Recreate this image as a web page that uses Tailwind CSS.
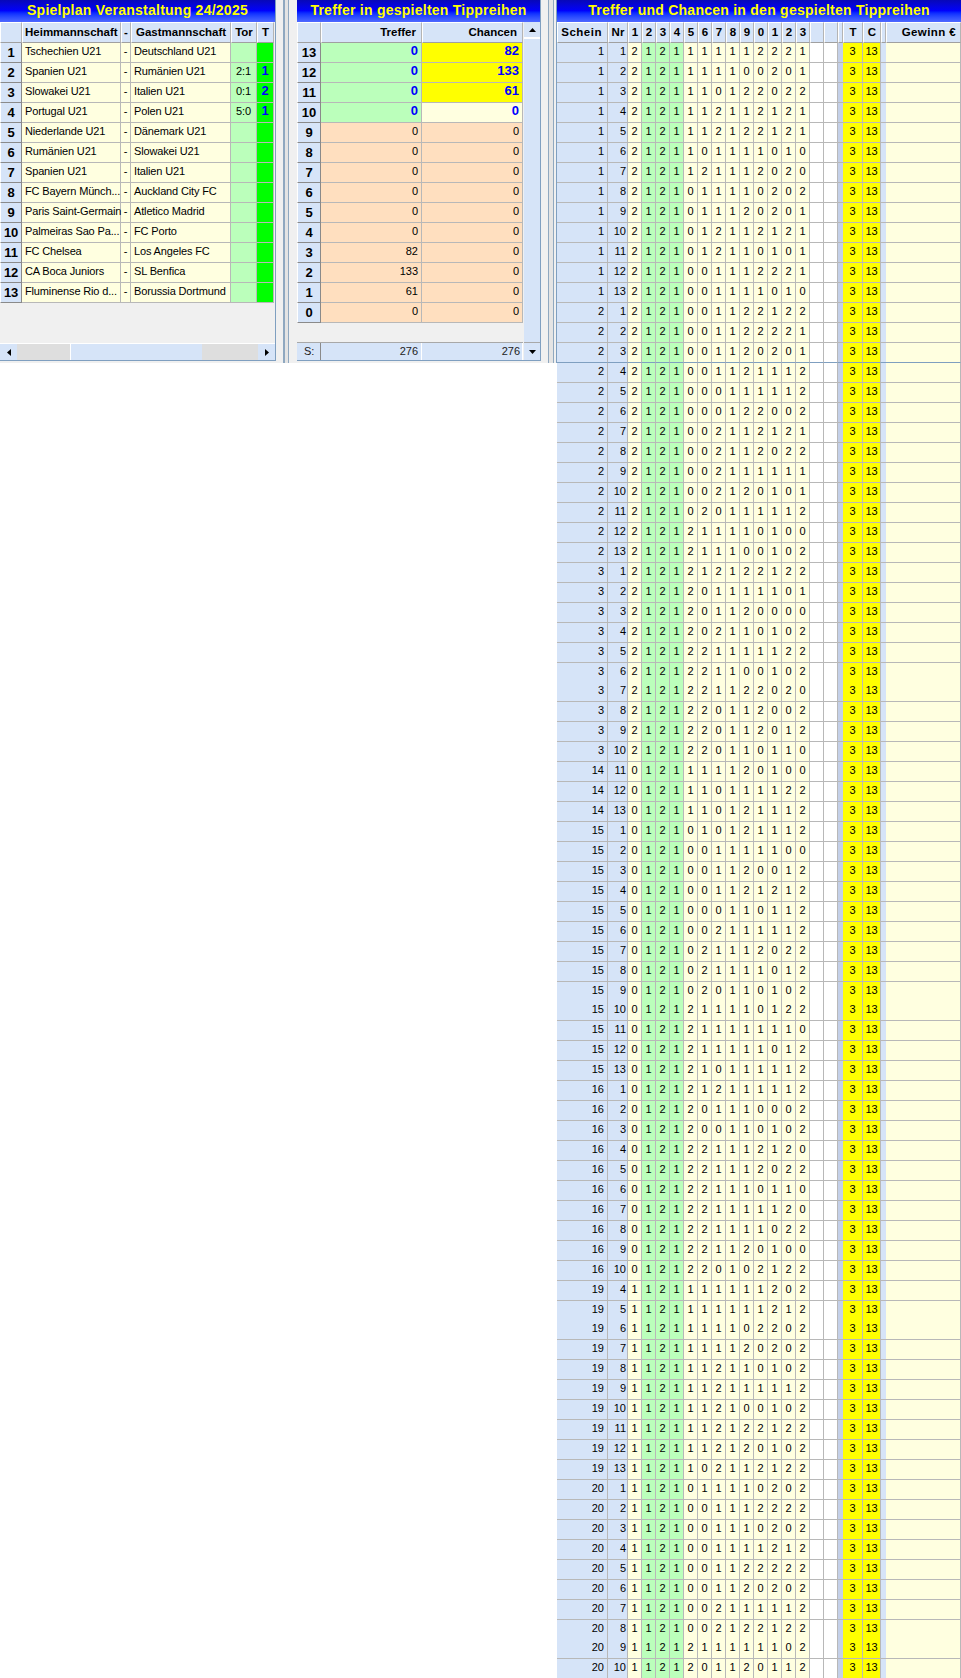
<!DOCTYPE html>
<html lang="de">
<head>
<meta charset="utf-8">
<title>Spielplan</title>
<script src="https://cdn.jsdelivr.net/npm/@tailwindcss/browser@4"></script>
</head>
<body class="bg-white">
<div class="w-[961px] h-[1678px] overflow-hidden flex items-start font-['Liberation_Sans',Arial,sans-serif] text-[11px] text-black">

<div class="w-[557px] h-[363px] bg-[#f0f0f0] flex shrink-0">
  <section class="w-[276px] h-[361px] flex flex-col border-r border-b border-[#7f9fc0] shrink-0">
    <h2 class="h-[22px] shrink-0 bg-gradient-to-b from-[#0808b8] via-[#0000ff] to-[#4f68ff] text-[#ffff00] font-bold text-[14px] leading-[21px] text-center tracking-[0.25px]">Spielplan Veranstaltung 24/2025</h2>
    <table class="table-fixed border-separate border-spacing-0 w-[274px] [&_th]:p-0 [&_th]:h-[21px] [&_th]:bg-[#d6e4f8] [&_th]:border-t [&_th]:border-l [&_th]:border-white [&_th]:border-r [&_th]:border-r-[#b4b4b4] [&_th]:border-b [&_th]:border-b-[#a0a0a0] [&_th]:text-[11.5px] [&_th]:font-bold [&_td]:p-0 [&_td]:h-5 [&_td]:align-top [&_td]:leading-[16px] [&_td]:whitespace-nowrap [&_td]:tracking-[-0.15px] [&_td]:border-r [&_td]:border-b [&_td]:border-[#b8b8b8] [&_td:nth-child(2)]:pl-[3px] [&_td:nth-child(4)]:pl-[3px] [&_td:nth-child(3)]:text-center [&_td:nth-child(5)]:text-center [&_td:nth-child(6)]:text-center [&_td:nth-child(6)]:text-[#0000ff] [&_td:nth-child(6)]:font-bold [&_td:nth-child(6)]:text-[13px] [&_td:first-child]:bg-[#d6e4f8] [&_td:first-child]:text-center [&_td:first-child]:font-bold [&_td:first-child]:text-[13px] [&_td:first-child]:leading-[19px] [&_td:first-child]:border-l [&_td:first-child]:border-l-white [&_td:first-child]:border-r-[#8a8a8a] [&_td:first-child]:border-b-[#8a8a8a]">
      <colgroup><col class="w-[22px]"><col class="w-[99px] bg-[#ffffe0]"><col class="w-[10px] bg-[#ffffe0]"><col class="w-[100px] bg-[#ffffe0]"><col class="w-[26px] bg-[#bbffbb]"><col class="w-[17px] bg-[#00ff00]"></colgroup>
      <thead><tr><th></th><th class="text-left pl-[2px]!">Heimmannschaft</th><th>-</th><th class="text-left pl-[4px]!">Gastmannschaft</th><th>Tor</th><th>T</th></tr></thead>
      <tbody>
        <tr><td>1</td><td>Tschechien U21</td><td>-</td><td>Deutschland U21</td><td></td><td></td></tr>
        <tr><td>2</td><td>Spanien U21</td><td>-</td><td>Rumänien U21</td><td>2:1</td><td>1</td></tr>
        <tr><td>3</td><td>Slowakei U21</td><td>-</td><td>Italien U21</td><td>0:1</td><td>2</td></tr>
        <tr><td>4</td><td>Portugal U21</td><td>-</td><td>Polen U21</td><td>5:0</td><td>1</td></tr>
        <tr><td>5</td><td>Niederlande U21</td><td>-</td><td>Dänemark U21</td><td></td><td></td></tr>
        <tr><td>6</td><td>Rumänien U21</td><td>-</td><td>Slowakei U21</td><td></td><td></td></tr>
        <tr><td>7</td><td>Spanien U21</td><td>-</td><td>Italien U21</td><td></td><td></td></tr>
        <tr><td>8</td><td>FC Bayern Münch...</td><td>-</td><td>Auckland City FC</td><td></td><td></td></tr>
        <tr><td>9</td><td>Paris Saint-Germain</td><td>-</td><td>Atletico Madrid</td><td></td><td></td></tr>
        <tr><td>10</td><td>Palmeiras Sao Pa...</td><td>-</td><td>FC Porto</td><td></td><td></td></tr>
        <tr><td>11</td><td>FC Chelsea</td><td>-</td><td>Los Angeles FC</td><td></td><td></td></tr>
        <tr><td>12</td><td>CA Boca Juniors</td><td>-</td><td>SL Benfica</td><td></td><td></td></tr>
        <tr><td>13</td><td>Fluminense Rio d...</td><td>-</td><td>Borussia Dortmund</td><td></td><td></td></tr>
      </tbody>
    </table>
    <div class="mt-auto h-[17px] flex border-t border-white bg-[#dedede]">
      <div class="w-[17px] flex items-center justify-center bg-[#d6e4f8]"><svg width="4" height="7" viewBox="0 0 4 7"><polygon points="4,0 4,7 0,3.5" fill="#000"/></svg></div>
      <div class="w-[53px]"></div>
      <div class="w-[132px] bg-[#d6e4f8] border-l border-white"></div>
      <div class="flex-1"></div>
      <div class="w-[17px] flex items-center justify-center bg-[#d6e4f8]"><svg width="4" height="7" viewBox="0 0 4 7"><polygon points="0,0 0,7 4,3.5" fill="#000"/></svg></div>
    </div>
  </section>

  <div class="ml-[7px] w-[6px] h-full border-l-2 border-r border-[#8fa8c0] bg-[#e4e4e4] shrink-0"></div>

  <section class="ml-[8px] w-[244px] h-[361px] flex flex-col border-r border-b border-[#7f9fc0] shrink-0">
    <h2 class="h-[22px] shrink-0 bg-gradient-to-b from-[#0808b8] via-[#0000ff] to-[#4f68ff] text-[#ffff00] font-bold text-[14px] leading-[21px] text-center tracking-[0.25px]">Treffer in gespielten Tippreihen</h2>
    <div class="flex flex-1">
      <div class="w-[226px] flex flex-col">
        <table class="table-fixed border-separate border-spacing-0 w-[226px] [&_th]:p-0 [&_th]:h-[21px] [&_th]:bg-[#d6e4f8] [&_th]:border-t [&_th]:border-l [&_th]:border-white [&_th]:border-r [&_th]:border-r-[#b4b4b4] [&_th]:border-b [&_th]:border-b-[#a0a0a0] [&_th]:text-[11.5px] [&_th]:font-bold [&_th]:text-right [&_th]:pr-[5px] [&_td]:p-0 [&_td]:h-5 [&_td]:align-top [&_td]:leading-[16px] [&_td]:text-right [&_td]:pr-[3px] [&_td]:border-r [&_td]:border-b [&_td]:border-[#b8b8b8] [&_td:first-child]:pr-0 [&_td:first-child]:bg-[#d6e4f8] [&_td:first-child]:text-center [&_td:first-child]:font-bold [&_td:first-child]:text-[13px] [&_td:first-child]:leading-[19px] [&_td:first-child]:border-l [&_td:first-child]:border-l-white [&_td:first-child]:border-r-[#8a8a8a] [&_td:first-child]:border-b-[#8a8a8a]">
          <colgroup><col class="w-[24px]"><col class="w-[101px]"><col class="w-[101px]"></colgroup>
          <thead><tr><th></th><th>Treffer</th><th>Chancen</th></tr></thead>
          <tbody>
            <tr><td>13</td><td class="bg-[#bbffbb] text-[#0000ff] font-bold text-[13px]">0</td><td class="bg-[#ffff00] text-[#0000ff] font-bold text-[13px]">82</td></tr>
            <tr><td>12</td><td class="bg-[#bbffbb] text-[#0000ff] font-bold text-[13px]">0</td><td class="bg-[#ffff00] text-[#0000ff] font-bold text-[13px]">133</td></tr>
            <tr><td>11</td><td class="bg-[#bbffbb] text-[#0000ff] font-bold text-[13px]">0</td><td class="bg-[#ffff00] text-[#0000ff] font-bold text-[13px]">61</td></tr>
            <tr><td>10</td><td class="bg-[#bbffbb] text-[#0000ff] font-bold text-[13px]">0</td><td class="bg-[#ffffe0] text-[#0000ff] font-bold text-[13px]">0</td></tr>
            <tr><td>9</td><td class="bg-[#ffdfbf]">0</td><td class="bg-[#ffdfbf]">0</td></tr>
            <tr><td>8</td><td class="bg-[#ffdfbf]">0</td><td class="bg-[#ffdfbf]">0</td></tr>
            <tr><td>7</td><td class="bg-[#ffdfbf]">0</td><td class="bg-[#ffdfbf]">0</td></tr>
            <tr><td>6</td><td class="bg-[#ffdfbf]">0</td><td class="bg-[#ffdfbf]">0</td></tr>
            <tr><td>5</td><td class="bg-[#ffdfbf]">0</td><td class="bg-[#ffdfbf]">0</td></tr>
            <tr><td>4</td><td class="bg-[#ffdfbf]">0</td><td class="bg-[#ffdfbf]">0</td></tr>
            <tr><td>3</td><td class="bg-[#ffdfbf]">82</td><td class="bg-[#ffdfbf]">0</td></tr>
            <tr><td>2</td><td class="bg-[#ffdfbf]">133</td><td class="bg-[#ffdfbf]">0</td></tr>
            <tr><td>1</td><td class="bg-[#ffdfbf]">61</td><td class="bg-[#ffdfbf]">0</td></tr>
            <tr><td>0</td><td class="bg-[#ffdfbf]">0</td><td class="bg-[#ffdfbf]">0</td></tr>
          </tbody>
        </table>
        <div class="mt-auto h-[18px] grid grid-cols-[24px_101px_101px] border-t border-[#a8a8a8] text-[#222] leading-[16px]">
          <div class="bg-[#d6e4f8] pl-[7px] border-r border-[#8a8a8a]">S:</div>
          <div class="bg-[#d6e4f8] text-right pr-[3px] border-r border-white">276</div>
          <div class="bg-[#d6e4f8] text-right pr-[2px] border-r border-white">276</div>
        </div>
      </div>
      <div class="w-[17px] flex flex-col bg-[#d6e4f8] border-l border-[#f0f0f0]">
        <div class="h-[17px] flex items-center justify-center border-b-2 border-white"><svg width="7" height="4" viewBox="0 0 7 4"><polygon points="0,4 7,4 3.5,0" fill="#000"/></svg></div>
        <div class="flex-1"></div>
        <div class="h-[18px] flex items-center justify-center border-t border-[#a8a8a8]"><svg width="7" height="4" viewBox="0 0 7 4"><polygon points="0,0 7,0 3.5,4" fill="#000"/></svg></div>
      </div>
    </div>
  </section>

  <div class="ml-[7px] w-[6px] h-full border-x border-[#8fa8c0] bg-[#e4e4e4] shrink-0"></div>
  <div class="ml-[2px] w-px h-full border-l border-[#7f9fc0] shrink-0"></div>
</div>

<section class="w-[404px] shrink-0">
  <h2 class="h-[22px] bg-gradient-to-b from-[#0808b8] via-[#0000ff] to-[#4f68ff] text-[#ffff00] font-bold text-[14px] leading-[21px] text-center tracking-[0.25px]">Treffer und Chancen in den gespielten Tippreihen</h2>
  <table class="table-fixed border-separate border-spacing-0 w-[404px] [&_th]:p-0 [&_th]:h-[21px] [&_th]:bg-[#d6e4f8] [&_th]:border-t [&_th]:border-l [&_th]:border-white [&_th]:border-r [&_th]:border-r-[#b4b4b4] [&_th]:border-b [&_th]:border-b-[#a0a0a0] [&_th]:text-[11.5px] [&_th]:font-bold [&_td]:p-0 [&_td]:h-5 [&_td]:align-top [&_td]:leading-[16px] [&_td]:text-center [&_td]:border-r [&_td]:border-b [&_td]:border-[#b8b8b8] [&_td:first-child]:text-right [&_td:first-child]:pr-[3px] [&_td:nth-child(2)]:text-right [&_td:nth-child(2)]:pr-[1px] [&_td:nth-child(18)]:border-r-0 [&_td:nth-child(21)]:border-r-0">
    <colgroup>
      <col class="w-[51px] bg-[#d6e4f8]"><col class="w-[20px] bg-[#d6e4f8]">
      <col class="w-[14px] bg-[#ffffe0]"><col class="w-[14px] bg-[#bbffbb]"><col class="w-[14px] bg-[#bbffbb]"><col class="w-[14px] bg-[#bbffbb]">
      <col class="w-[14px] bg-[#ffffe0]"><col class="w-[14px] bg-[#ffffe0]"><col class="w-[14px] bg-[#ffffe0]"><col class="w-[14px] bg-[#ffffe0]"><col class="w-[14px] bg-[#ffffe0]"><col class="w-[14px] bg-[#ffffe0]"><col class="w-[14px] bg-[#ffffe0]"><col class="w-[14px] bg-[#ffffe0]"><col class="w-[14px] bg-[#ffffe0]">
      <col class="w-[14px] bg-white"><col class="w-[14px] bg-white">
      <col class="w-[5px] bg-[#c4d0e8]">
      <col class="w-[20px] bg-[#ffff00]"><col class="w-[18px] bg-[#ffff00]">
      <col class="w-[5px] bg-[#d6e4f8]">
      <col class="w-[75px] bg-[#ffffe0]">
    </colgroup>
    <thead><tr><th class="text-right pr-[5px]! tracking-[0.5px]">Schein</th><th>Nr</th><th>1</th><th>2</th><th>3</th><th>4</th><th>5</th><th>6</th><th>7</th><th>8</th><th>9</th><th>0</th><th>1</th><th>2</th><th>3</th><th></th><th></th><th></th><th>T</th><th>C</th><th></th><th class="text-right pr-[4px]! tracking-[0.4px]">Gewinn €</th></tr></thead>
    <tbody>
<tr><td>1<td>1<td>2<td>1<td>2<td>1<td>1<td>1<td>1<td>1<td>1<td>2<td>2<td>2<td>1<td><td><td><td>3<td>13<td><td>
<tr><td>1<td>2<td>2<td>1<td>2<td>1<td>1<td>1<td>1<td>1<td>0<td>0<td>2<td>0<td>1<td><td><td><td>3<td>13<td><td>
<tr><td>1<td>3<td>2<td>1<td>2<td>1<td>1<td>1<td>0<td>1<td>2<td>2<td>0<td>2<td>2<td><td><td><td>3<td>13<td><td>
<tr><td>1<td>4<td>2<td>1<td>2<td>1<td>1<td>1<td>2<td>1<td>1<td>2<td>1<td>2<td>1<td><td><td><td>3<td>13<td><td>
<tr><td>1<td>5<td>2<td>1<td>2<td>1<td>1<td>1<td>2<td>1<td>2<td>2<td>1<td>2<td>1<td><td><td><td>3<td>13<td><td>
<tr><td>1<td>6<td>2<td>1<td>2<td>1<td>1<td>0<td>1<td>1<td>1<td>1<td>0<td>1<td>0<td><td><td><td>3<td>13<td><td>
<tr><td>1<td>7<td>2<td>1<td>2<td>1<td>1<td>2<td>1<td>1<td>1<td>2<td>0<td>2<td>0<td><td><td><td>3<td>13<td><td>
<tr><td>1<td>8<td>2<td>1<td>2<td>1<td>0<td>1<td>1<td>1<td>1<td>0<td>2<td>0<td>2<td><td><td><td>3<td>13<td><td>
<tr><td>1<td>9<td>2<td>1<td>2<td>1<td>0<td>1<td>1<td>1<td>2<td>0<td>2<td>0<td>1<td><td><td><td>3<td>13<td><td>
<tr><td>1<td>10<td>2<td>1<td>2<td>1<td>0<td>1<td>2<td>1<td>1<td>2<td>1<td>2<td>1<td><td><td><td>3<td>13<td><td>
<tr><td>1<td>11<td>2<td>1<td>2<td>1<td>0<td>1<td>2<td>1<td>1<td>0<td>1<td>0<td>1<td><td><td><td>3<td>13<td><td>
<tr><td>1<td>12<td>2<td>1<td>2<td>1<td>0<td>0<td>1<td>1<td>1<td>2<td>2<td>2<td>1<td><td><td><td>3<td>13<td><td>
<tr><td>1<td>13<td>2<td>1<td>2<td>1<td>0<td>0<td>1<td>1<td>1<td>1<td>0<td>1<td>0<td><td><td><td>3<td>13<td><td>
<tr><td>2<td>1<td>2<td>1<td>2<td>1<td>0<td>0<td>1<td>1<td>2<td>2<td>1<td>2<td>2<td><td><td><td>3<td>13<td><td>
<tr><td>2<td>2<td>2<td>1<td>2<td>1<td>0<td>0<td>1<td>1<td>2<td>2<td>2<td>2<td>1<td><td><td><td>3<td>13<td><td>
<tr class="[&>td]:border-b-[#7f9fc0]!"><td>2<td>3<td>2<td>1<td>2<td>1<td>0<td>0<td>1<td>1<td>2<td>0<td>2<td>0<td>1<td><td><td><td>3<td>13<td><td>
<tr><td>2<td>4<td>2<td>1<td>2<td>1<td>0<td>0<td>1<td>1<td>2<td>1<td>1<td>1<td>2<td><td><td><td>3<td>13<td><td>
<tr><td>2<td>5<td>2<td>1<td>2<td>1<td>0<td>0<td>0<td>1<td>1<td>1<td>1<td>1<td>2<td><td><td><td>3<td>13<td><td>
<tr><td>2<td>6<td>2<td>1<td>2<td>1<td>0<td>0<td>0<td>1<td>2<td>2<td>0<td>0<td>2<td><td><td><td>3<td>13<td><td>
<tr><td>2<td>7<td>2<td>1<td>2<td>1<td>0<td>0<td>2<td>1<td>1<td>2<td>1<td>2<td>1<td><td><td><td>3<td>13<td><td>
<tr><td>2<td>8<td>2<td>1<td>2<td>1<td>0<td>0<td>2<td>1<td>1<td>2<td>0<td>2<td>2<td><td><td><td>3<td>13<td><td>
<tr><td>2<td>9<td>2<td>1<td>2<td>1<td>0<td>0<td>2<td>1<td>1<td>1<td>1<td>1<td>1<td><td><td><td>3<td>13<td><td>
<tr><td>2<td>10<td>2<td>1<td>2<td>1<td>0<td>0<td>2<td>1<td>2<td>0<td>1<td>0<td>1<td><td><td><td>3<td>13<td><td>
<tr><td>2<td>11<td>2<td>1<td>2<td>1<td>0<td>2<td>0<td>1<td>1<td>1<td>1<td>1<td>2<td><td><td><td>3<td>13<td><td>
<tr><td>2<td>12<td>2<td>1<td>2<td>1<td>2<td>1<td>1<td>1<td>1<td>0<td>1<td>0<td>0<td><td><td><td>3<td>13<td><td>
<tr><td>2<td>13<td>2<td>1<td>2<td>1<td>2<td>1<td>1<td>1<td>0<td>0<td>1<td>0<td>2<td><td><td><td>3<td>13<td><td>
<tr><td>3<td>1<td>2<td>1<td>2<td>1<td>2<td>1<td>2<td>1<td>2<td>2<td>1<td>2<td>2<td><td><td><td>3<td>13<td><td>
<tr><td>3<td>2<td>2<td>1<td>2<td>1<td>2<td>0<td>1<td>1<td>1<td>1<td>1<td>0<td>1<td><td><td><td>3<td>13<td><td>
<tr><td>3<td>3<td>2<td>1<td>2<td>1<td>2<td>0<td>1<td>1<td>2<td>0<td>0<td>0<td>0<td><td><td><td>3<td>13<td><td>
<tr><td>3<td>4<td>2<td>1<td>2<td>1<td>2<td>0<td>2<td>1<td>1<td>0<td>1<td>0<td>2<td><td><td><td>3<td>13<td><td>
<tr><td>3<td>5<td>2<td>1<td>2<td>1<td>2<td>2<td>1<td>1<td>1<td>1<td>1<td>2<td>2<td><td><td><td>3<td>13<td><td>
<tr class="[&>td]:h-[19px]! [&>td]:border-b-0!"><td>3<td>6<td>2<td>1<td>2<td>1<td>2<td>2<td>1<td>1<td>0<td>0<td>1<td>0<td>2<td><td><td><td>3<td>13<td><td>
<tr><td>3<td>7<td>2<td>1<td>2<td>1<td>2<td>2<td>1<td>1<td>2<td>2<td>0<td>2<td>0<td><td><td><td>3<td>13<td><td>
<tr><td>3<td>8<td>2<td>1<td>2<td>1<td>2<td>2<td>0<td>1<td>1<td>2<td>0<td>0<td>2<td><td><td><td>3<td>13<td><td>
<tr><td>3<td>9<td>2<td>1<td>2<td>1<td>2<td>2<td>0<td>1<td>1<td>2<td>0<td>1<td>2<td><td><td><td>3<td>13<td><td>
<tr><td>3<td>10<td>2<td>1<td>2<td>1<td>2<td>2<td>0<td>1<td>1<td>0<td>1<td>1<td>0<td><td><td><td>3<td>13<td><td>
<tr><td>14<td>11<td>0<td>1<td>2<td>1<td>1<td>1<td>1<td>1<td>2<td>0<td>1<td>0<td>0<td><td><td><td>3<td>13<td><td>
<tr><td>14<td>12<td>0<td>1<td>2<td>1<td>1<td>1<td>0<td>1<td>1<td>1<td>1<td>2<td>2<td><td><td><td>3<td>13<td><td>
<tr><td>14<td>13<td>0<td>1<td>2<td>1<td>1<td>1<td>0<td>1<td>2<td>1<td>1<td>1<td>2<td><td><td><td>3<td>13<td><td>
<tr><td>15<td>1<td>0<td>1<td>2<td>1<td>0<td>1<td>0<td>1<td>2<td>1<td>1<td>1<td>2<td><td><td><td>3<td>13<td><td>
<tr><td>15<td>2<td>0<td>1<td>2<td>1<td>0<td>0<td>1<td>1<td>1<td>1<td>1<td>0<td>0<td><td><td><td>3<td>13<td><td>
<tr><td>15<td>3<td>0<td>1<td>2<td>1<td>0<td>0<td>1<td>1<td>2<td>0<td>0<td>1<td>2<td><td><td><td>3<td>13<td><td>
<tr><td>15<td>4<td>0<td>1<td>2<td>1<td>0<td>0<td>1<td>1<td>2<td>1<td>2<td>1<td>2<td><td><td><td>3<td>13<td><td>
<tr><td>15<td>5<td>0<td>1<td>2<td>1<td>0<td>0<td>0<td>1<td>1<td>0<td>1<td>1<td>2<td><td><td><td>3<td>13<td><td>
<tr><td>15<td>6<td>0<td>1<td>2<td>1<td>0<td>0<td>2<td>1<td>1<td>1<td>1<td>1<td>2<td><td><td><td>3<td>13<td><td>
<tr><td>15<td>7<td>0<td>1<td>2<td>1<td>0<td>2<td>1<td>1<td>1<td>2<td>0<td>2<td>2<td><td><td><td>3<td>13<td><td>
<tr><td>15<td>8<td>0<td>1<td>2<td>1<td>0<td>2<td>1<td>1<td>1<td>1<td>0<td>1<td>2<td><td><td><td>3<td>13<td><td>
<tr class="[&>td]:h-[19px]! [&>td]:border-b-0!"><td>15<td>9<td>0<td>1<td>2<td>1<td>0<td>2<td>0<td>1<td>1<td>0<td>1<td>0<td>2<td><td><td><td>3<td>13<td><td>
<tr><td>15<td>10<td>0<td>1<td>2<td>1<td>2<td>1<td>1<td>1<td>1<td>0<td>1<td>2<td>2<td><td><td><td>3<td>13<td><td>
<tr><td>15<td>11<td>0<td>1<td>2<td>1<td>2<td>1<td>1<td>1<td>1<td>1<td>1<td>1<td>0<td><td><td><td>3<td>13<td><td>
<tr><td>15<td>12<td>0<td>1<td>2<td>1<td>2<td>1<td>1<td>1<td>1<td>1<td>0<td>1<td>2<td><td><td><td>3<td>13<td><td>
<tr><td>15<td>13<td>0<td>1<td>2<td>1<td>2<td>1<td>0<td>1<td>1<td>1<td>1<td>1<td>2<td><td><td><td>3<td>13<td><td>
<tr><td>16<td>1<td>0<td>1<td>2<td>1<td>2<td>1<td>2<td>1<td>1<td>1<td>1<td>1<td>2<td><td><td><td>3<td>13<td><td>
<tr><td>16<td>2<td>0<td>1<td>2<td>1<td>2<td>0<td>1<td>1<td>1<td>0<td>0<td>0<td>2<td><td><td><td>3<td>13<td><td>
<tr><td>16<td>3<td>0<td>1<td>2<td>1<td>2<td>0<td>0<td>1<td>1<td>0<td>1<td>0<td>2<td><td><td><td>3<td>13<td><td>
<tr><td>16<td>4<td>0<td>1<td>2<td>1<td>2<td>2<td>1<td>1<td>1<td>2<td>1<td>2<td>0<td><td><td><td>3<td>13<td><td>
<tr><td>16<td>5<td>0<td>1<td>2<td>1<td>2<td>2<td>1<td>1<td>1<td>2<td>0<td>2<td>2<td><td><td><td>3<td>13<td><td>
<tr><td>16<td>6<td>0<td>1<td>2<td>1<td>2<td>2<td>1<td>1<td>1<td>0<td>1<td>1<td>0<td><td><td><td>3<td>13<td><td>
<tr><td>16<td>7<td>0<td>1<td>2<td>1<td>2<td>2<td>1<td>1<td>1<td>1<td>1<td>2<td>0<td><td><td><td>3<td>13<td><td>
<tr><td>16<td>8<td>0<td>1<td>2<td>1<td>2<td>2<td>1<td>1<td>1<td>1<td>0<td>2<td>2<td><td><td><td>3<td>13<td><td>
<tr><td>16<td>9<td>0<td>1<td>2<td>1<td>2<td>2<td>1<td>1<td>2<td>0<td>1<td>0<td>0<td><td><td><td>3<td>13<td><td>
<tr><td>16<td>10<td>0<td>1<td>2<td>1<td>2<td>2<td>0<td>1<td>0<td>2<td>1<td>2<td>2<td><td><td><td>3<td>13<td><td>
<tr><td>19<td>4<td>1<td>1<td>2<td>1<td>1<td>1<td>1<td>1<td>1<td>1<td>2<td>0<td>2<td><td><td><td>3<td>13<td><td>
<tr class="[&>td]:h-[19px]! [&>td]:border-b-0!"><td>19<td>5<td>1<td>1<td>2<td>1<td>1<td>1<td>1<td>1<td>1<td>1<td>2<td>1<td>2<td><td><td><td>3<td>13<td><td>
<tr><td>19<td>6<td>1<td>1<td>2<td>1<td>1<td>1<td>1<td>1<td>0<td>2<td>2<td>0<td>2<td><td><td><td>3<td>13<td><td>
<tr><td>19<td>7<td>1<td>1<td>2<td>1<td>1<td>1<td>1<td>1<td>2<td>0<td>2<td>0<td>2<td><td><td><td>3<td>13<td><td>
<tr><td>19<td>8<td>1<td>1<td>2<td>1<td>1<td>1<td>2<td>1<td>1<td>0<td>1<td>0<td>2<td><td><td><td>3<td>13<td><td>
<tr><td>19<td>9<td>1<td>1<td>2<td>1<td>1<td>1<td>2<td>1<td>1<td>1<td>1<td>1<td>2<td><td><td><td>3<td>13<td><td>
<tr><td>19<td>10<td>1<td>1<td>2<td>1<td>1<td>1<td>2<td>1<td>0<td>0<td>1<td>0<td>2<td><td><td><td>3<td>13<td><td>
<tr><td>19<td>11<td>1<td>1<td>2<td>1<td>1<td>1<td>2<td>1<td>2<td>2<td>1<td>2<td>2<td><td><td><td>3<td>13<td><td>
<tr><td>19<td>12<td>1<td>1<td>2<td>1<td>1<td>1<td>2<td>1<td>2<td>0<td>1<td>0<td>2<td><td><td><td>3<td>13<td><td>
<tr><td>19<td>13<td>1<td>1<td>2<td>1<td>1<td>0<td>2<td>1<td>1<td>2<td>1<td>2<td>2<td><td><td><td>3<td>13<td><td>
<tr><td>20<td>1<td>1<td>1<td>2<td>1<td>0<td>1<td>1<td>1<td>1<td>0<td>2<td>0<td>2<td><td><td><td>3<td>13<td><td>
<tr><td>20<td>2<td>1<td>1<td>2<td>1<td>0<td>0<td>1<td>1<td>1<td>2<td>2<td>2<td>2<td><td><td><td>3<td>13<td><td>
<tr><td>20<td>3<td>1<td>1<td>2<td>1<td>0<td>0<td>1<td>1<td>1<td>0<td>2<td>0<td>2<td><td><td><td>3<td>13<td><td>
<tr><td>20<td>4<td>1<td>1<td>2<td>1<td>0<td>0<td>1<td>1<td>1<td>1<td>2<td>1<td>2<td><td><td><td>3<td>13<td><td>
<tr><td>20<td>5<td>1<td>1<td>2<td>1<td>0<td>0<td>1<td>1<td>2<td>2<td>2<td>2<td>2<td><td><td><td>3<td>13<td><td>
<tr><td>20<td>6<td>1<td>1<td>2<td>1<td>0<td>0<td>1<td>1<td>2<td>0<td>2<td>0<td>2<td><td><td><td>3<td>13<td><td>
<tr><td>20<td>7<td>1<td>1<td>2<td>1<td>0<td>0<td>2<td>1<td>1<td>1<td>1<td>1<td>2<td><td><td><td>3<td>13<td><td>
<tr class="[&>td]:h-[19px]! [&>td]:border-b-0!"><td>20<td>8<td>1<td>1<td>2<td>1<td>0<td>0<td>2<td>1<td>2<td>2<td>1<td>2<td>2<td><td><td><td>3<td>13<td><td>
<tr><td>20<td>9<td>1<td>1<td>2<td>1<td>2<td>1<td>1<td>1<td>1<td>1<td>1<td>0<td>2<td><td><td><td>3<td>13<td><td>
<tr><td>20<td>10<td>1<td>1<td>2<td>1<td>2<td>0<td>1<td>1<td>2<td>0<td>1<td>1<td>2<td><td><td><td>3<td>13<td><td>
    </tbody>
  </table>
</section>
</div>
</body>
</html>
